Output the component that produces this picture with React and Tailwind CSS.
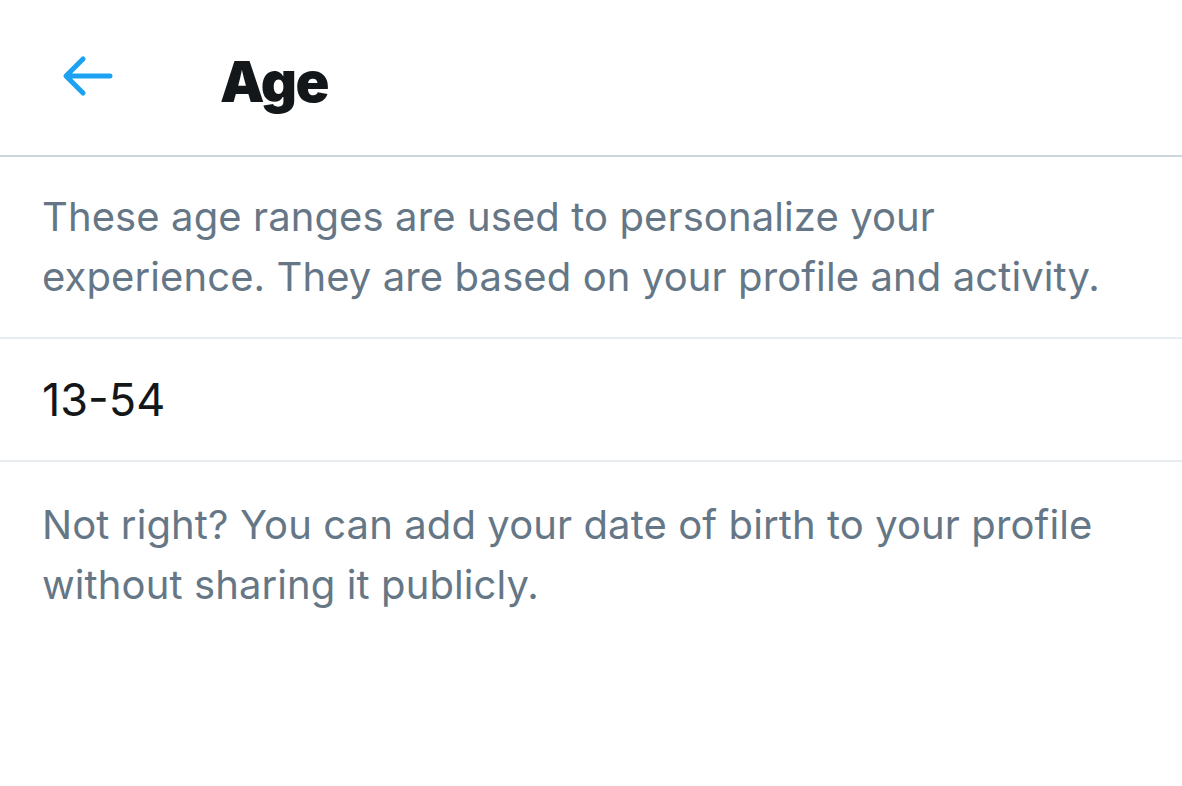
import React from "react";

const BackArrow = () => (
  <svg width="52" height="42" viewBox="0 0 52 42" fill="none">
    <path
      d="M48 21H5M21 4L4 21l17 17"
      stroke="#1da1f2"
      strokeWidth="5"
      strokeLinecap="round"
      strokeLinejoin="round"
    />
  </svg>
);

const App = () => {
  return (
    <div
      className="w-[1182px] h-[786px] bg-white overflow-hidden"
      style={{ fontFamily: "Inter, 'Noto Sans', sans-serif" }}
    >
      {/* header */}
      <div className="h-[157px] flex items-center border-b-2 border-[#ccd6dd]">
        <div className="w-[220px] pl-[62px] -mt-[4px] flex items-center">
          <BackArrow />
        </div>
        <h1 className="text-[56px] leading-none font-black text-[#14171a] tracking-[-1.5px] mt-[8px]">
          Age
        </h1>
      </div>

      <div className="px-[42px] pt-[30px] pb-[30px] border-b-2 border-[#e6ecf0]">
        <p className="text-[40px] leading-[60px] tracking-[0.1px] text-[#657786]">
          These age ranges are used to personalize your
          <br />
          experience. They are based on your profile and activity.
        </p>
      </div>

      <div className="h-[123px] px-[42px] flex items-center border-b-2 border-[#e6ecf0]">
        <span className="text-[45px] leading-[60px] text-[#14171a]">13-54</span>
      </div>

      <div className="px-[42px] pt-[33px]">
        <p className="text-[40px] leading-[60px] tracking-[0.1px] text-[#657786]">
          Not right? You can add your date of birth to your profile
          <br />
          without sharing it publicly.
        </p>
      </div>
    </div>
  );
};

export default App;
